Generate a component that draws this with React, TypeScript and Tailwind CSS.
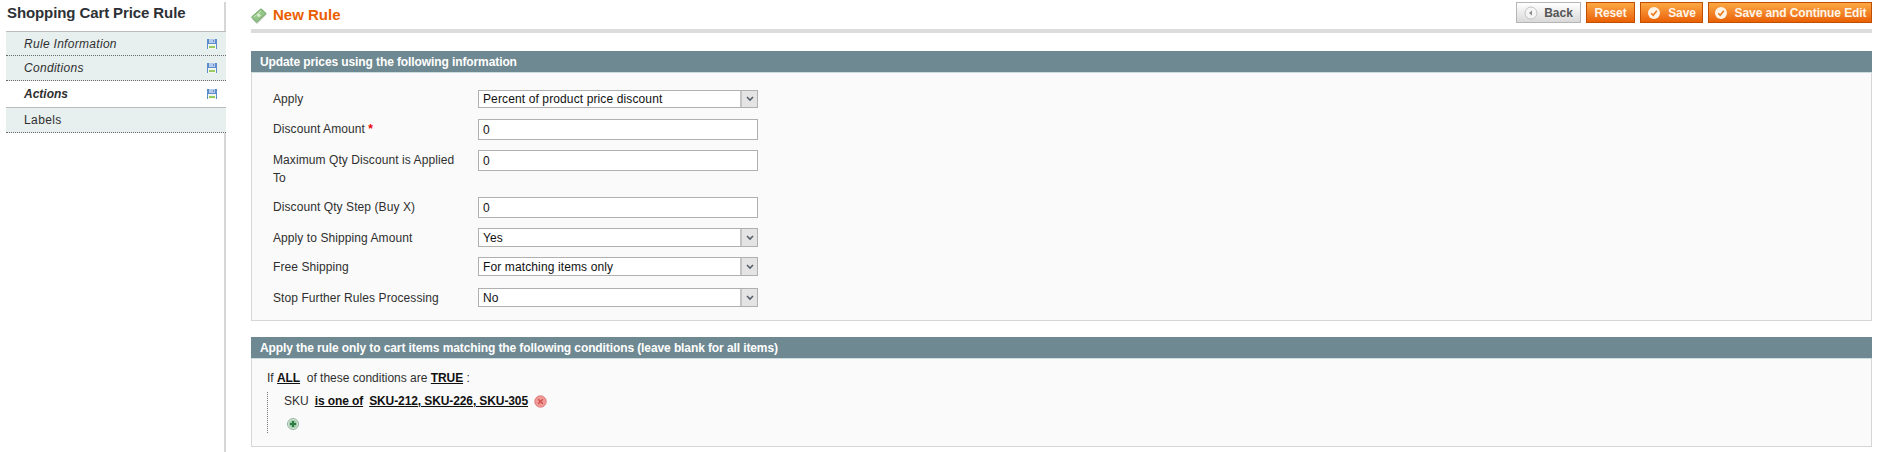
import React from 'react';

const DiskIcon = () => (
  <svg width="10" height="10" viewBox="0 0 10 10" className="block">
    <rect x="0" y="0" width="10" height="10" fill="#5f8ccb" />
    <rect x="2" y="0" width="6" height="4" fill="#b4cbec" />
    <rect x="6" y="1" width="1" height="2" fill="#5f8ccb" />
    <rect x="1" y="5" width="8" height="5" fill="#f4f7ee" />
    <rect x="2" y="7" width="6" height="2" fill="#96cc62" />
  </svg>
);

const CheckIcon = () => (
  <svg width="14" height="14" viewBox="0 0 14 14" className="block">
    <circle cx="7" cy="7" r="6" fill="#fff4e6" />
    <path d="M4.2 7.2 L6.2 9.2 L9.8 4.8" fill="none" stroke="#e8781a" strokeWidth="1.6" />
  </svg>
);

const BackIcon = () => (
  <svg width="14" height="14" viewBox="0 0 14 14" className="block">
    <circle cx="7" cy="7" r="6" fill="#f4f4f4" stroke="#c4c4c4" />
    <path d="M8 4.5 L5 7 L8 9.5 Z" fill="#8a8a8a" />
  </svg>
);

const MoneyIcon = () => (
  <svg width="16" height="16" viewBox="0 0 16 16" className="block">
    <path d="M1 11 L11 1 L16 6 L6 16 Z" fill="#b9c8b4" />
    <path d="M0.5 9 L10 0.8 L15 5.5 L5.5 14 Z" fill="#94c688" stroke="#74a96a" />
    <circle cx="7.8" cy="7.3" r="1.8" fill="#d8eccd" />
    <path d="M3 9 L10 3" stroke="#c9e4bc" />
  </svg>
);

const RemoveIcon = () => (
  <svg width="13" height="13" viewBox="0 0 13 13" className="block">
    <circle cx="6.5" cy="6.5" r="5.7" fill="#f09a98" stroke="#e07a78" />
    <path d="M4.2 4.2 L8.8 8.8 M8.8 4.2 L4.2 8.8" stroke="#cf4f4c" strokeWidth="1.3" />
  </svg>
);

const AddIcon = () => (
  <svg width="12" height="12" viewBox="0 0 12 12" className="block">
    <circle cx="6" cy="6" r="5.5" fill="#dbe7dc" stroke="#93b39a" />
    <circle cx="6" cy="6" r="4" fill="#9ccaa6" />
    <path d="M6 3 V9 M3 6 H9" stroke="#2a7a42" strokeWidth="2" />
  </svg>
);

const tabs = [
  { label: 'Rule Information', cls: 'italic tracking-[0.3px] bg-[#e7efef] border-b border-dotted border-[#6a6a6a] h-[24px]', icon: true },
  { label: 'Conditions', cls: 'italic tracking-[0.3px] bg-[#e7efef] border-b border-dotted border-[#6a6a6a] h-[25px]', icon: true },
  { label: 'Actions', cls: 'italic font-bold bg-white h-[26px]', icon: true },
  { label: 'Labels', cls: 'tracking-[0.4px] bg-[#e7efef] border-t border-b border-t-[#bcbcbc] border-b-[#6a6a6a] [border-bottom-style:dotted] h-[26px]', icon: false },
];

const SelectBox = ({ value, h }: { value: string; h: string }) => (
  <div className={`w-[280px] ${h} bg-white border border-[#b0b0b0] flex items-center justify-between text-[12px] tracking-[0.12px] text-[#111] pl-[4px]`}>
    <span>{value}</span>
    <span className="w-[17px] self-stretch bg-[#e4e4e4] border-l-2 border-[#c4c4c4] flex items-center justify-center">
      <svg width="8" height="6" viewBox="0 0 8 6">
        <path d="M1 1 L4 4 L7 1" fill="none" stroke="#555f6a" strokeWidth="1.6" />
      </svg>
    </span>
  </div>
);

const InputBox = ({ value }: { value: string }) => (
  <div className="w-[280px] h-[21px] bg-white border border-[#b0b0b0] flex items-center text-[12px] text-[#111] pl-[4px]">
    {value}
  </div>
);

const Row = ({ label, h, children }: { label: React.ReactNode; h: string; children: React.ReactNode }) => (
  <div className={`flex ${h}`}>
    <div className="w-[205px] pr-[20px] pt-[1px] text-[12px] tracking-[0.08px] leading-[18px] text-[#2f2f2f]">{label}</div>
    <div>{children}</div>
  </div>
);

const PanelHead = ({ title }: { title: string }) => (
  <div className="h-[22px] bg-[#6f8992] border-b border-[#cddddd] pl-[9px] flex items-center text-[12px] tracking-[-0.1px] font-bold text-white">
    {title}
  </div>
);

const Link = ({ children }: { children: React.ReactNode }) => (
  <span className="font-bold underline tracking-[-0.1px] text-[#111]">{children}</span>
);

const orangeBtn = 'flex items-center justify-center border border-[#c04f00] bg-gradient-to-b from-[#fba842] to-[#ea6000] text-[12px] tracking-[-0.1px] font-bold text-[#fff6ea]';

export default function App() {
  return (
    <div className="w-[1880px] h-[452px] overflow-hidden bg-white flex font-['Liberation_Sans',Arial,sans-serif]">
      {/* Sidebar */}
      <div className="w-[220px] ml-[6px] mt-[2px] border-r-[2px] border-[#d6d6d6]">
        <h3 className="h-[29px] pl-[1px] text-[15px] tracking-[-0.1px] leading-[22px] font-bold text-[#2d3136]">Shopping Cart Price Rule</h3>
        <div className="border-t border-[#bcbcbc] w-[220px]">
          {tabs.map((t) => (
            <div key={t.label} className={`flex items-center justify-between pl-[18px] pr-[9px] text-[12px] text-[#2f2f2f] ${t.cls}`}>
              <span>{t.label}</span>
              {t.icon && <DiskIcon />}
            </div>
          ))}
        </div>
      </div>

      {/* Main */}
      <div className="w-[1621px] ml-[25px]">
        <div className="h-[33px] border-b-[4px] border-[#dcdcdc] flex justify-between pt-[2px]">
          <div className="flex items-center gap-[6px] h-[21px] mt-[3px]">
            <MoneyIcon />
            <span className="text-[15px] font-bold text-[#eb5e00]">New Rule</span>
          </div>
          <div className="flex gap-[5px] h-[21px]">
            <button className="w-[65px] flex items-center justify-center gap-[6px] border border-[#b5b5b5] bg-gradient-to-b from-[#ffffff] to-[#d9d9d9] text-[12px] font-bold text-[#555]">
              <BackIcon />
              Back
            </button>
            <button className={`w-[49px] ${orangeBtn}`}>Reset</button>
            <button className={`w-[63px] gap-[7px] ${orangeBtn}`}>
              <CheckIcon />
              Save
            </button>
            <button className={`w-[164px] gap-[7px] ${orangeBtn}`}>
              <CheckIcon />
              Save and Continue Edit
            </button>
          </div>
        </div>

        <div className="mt-[18px]">
          <PanelHead title="Update prices using the following information" />
          <div className="h-[248px] bg-[#fafafa] border border-t-0 border-[#d6d6d6] pl-[21px] pt-[17px]">
            <Row label={<span className="block -mt-[1px]">Apply</span>} h="h-[29px]"><SelectBox value="Percent of product price discount" h="h-[18px]" /></Row>
            <Row label={<>Discount Amount <span className="font-bold text-[#eb0000]">*</span></>} h="h-[31px]"><InputBox value="0" /></Row>
            <Row label="Maximum Qty Discount is Applied To" h="h-[47px]"><InputBox value="0" /></Row>
            <Row label="Discount Qty Step (Buy X)" h="h-[31px]"><InputBox value="0" /></Row>
            <Row label="Apply to Shipping Amount" h="h-[29px]"><SelectBox value="Yes" h="h-[19px]" /></Row>
            <Row label="Free Shipping" h="h-[31px]"><SelectBox value="For matching items only" h="h-[19px]" /></Row>
            <Row label="Stop Further Rules Processing" h="h-[19px]"><SelectBox value="No" h="h-[19px]" /></Row>
          </div>
        </div>

        <div className="mt-[16px]">
          <PanelHead title="Apply the rule only to cart items matching the following conditions (leave blank for all items)" />
          <div className="h-[88px] bg-[#fafafa] border border-t-0 border-[#d6d6d6] pl-[15px] pt-[10px] text-[12px] leading-[18px] text-[#2f2f2f]">
            <div>
              If <Link>ALL</Link>&nbsp; of these conditions are <Link>TRUE</Link> :
            </div>
            <div className="mt-[5px] border-l border-dotted border-[#777] pl-[16px] h-[41px]">
              <div className="flex items-center gap-[6px]">
                <span>SKU</span>
                <Link>is one of</Link>
                <Link>SKU-212, SKU-226, SKU-305</Link>
                <RemoveIcon />
              </div>
              <div className="mt-[8px] ml-[3px]">
                <AddIcon />
              </div>
            </div>
          </div>
        </div>
      </div>
    </div>
  );
}
